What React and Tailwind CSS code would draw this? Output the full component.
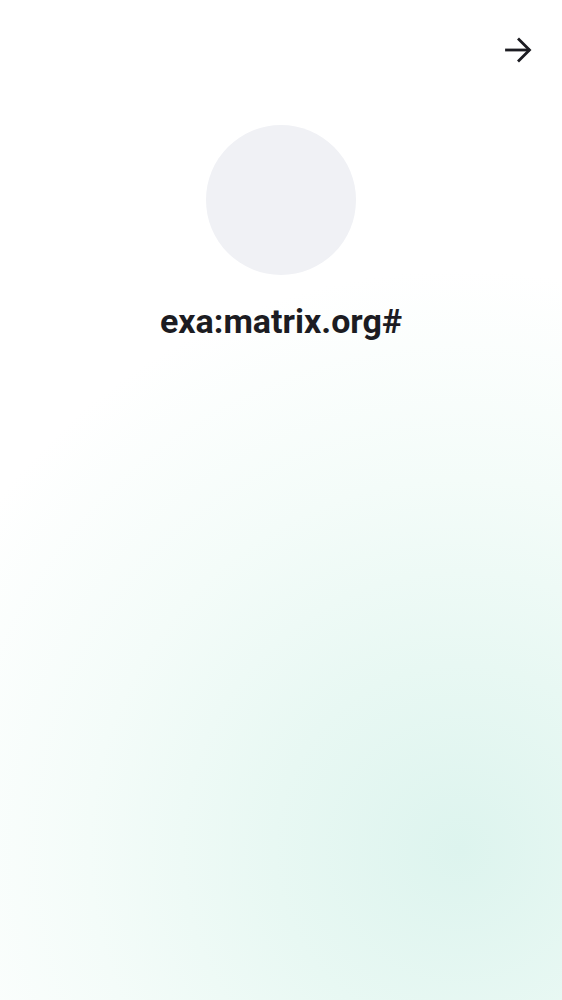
import { useState } from "react";

const ArrowRight = () => (
  <svg width="28" height="26" viewBox="0 0 28 26" fill="none" stroke="#1c1c22" strokeWidth="2.8" strokeLinecap="square">
    <path d="M2.5 13h22" />
    <path d="M15 2.5L25.5 13 15 23.5" />
  </svg>
);

export default function App() {
  const [userId] = useState("exa:matrix.org#");

  return (
    <div
      className="min-h-screen w-full bg-white bg-[radial-gradient(circle_580px_at_460px_850px,#ddf4ee_0%,#e8f8f3_32%,#f4fcf9_64%,#ffffff_100%)]"
      style={{ fontFamily: "Roboto, 'Noto Sans', sans-serif" }}
    >
      {/* top bar */}
      <div className="flex justify-end pt-[37px] pr-[30px] h-[125px]">
        <button className="h-[26px] w-[28px]">
          <ArrowRight />
        </button>
      </div>

      {/* avatar + name */}
      <div className="flex flex-col items-center">
        <div className="w-[150px] h-[150px] rounded-full bg-[#f0f1f5]" />
        <h1 className="mt-[25px] text-[34px] leading-[42px] font-bold text-[#1c1c22]">
          {userId}
        </h1>
      </div>
    </div>
  );
}
